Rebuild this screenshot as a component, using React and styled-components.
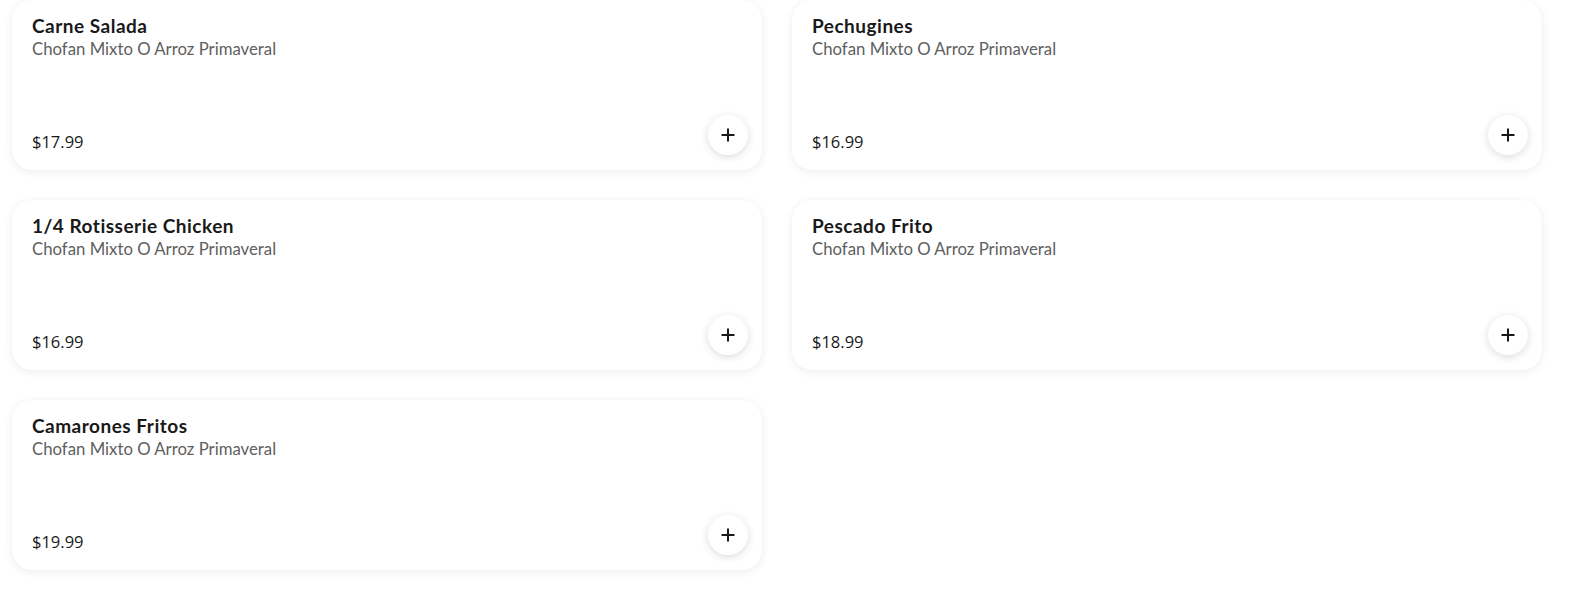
import React from "react";
import styled, { createGlobalStyle } from "styled-components";

const Global = createGlobalStyle`
  html, body { margin: 0; padding: 0; background: #ffffff; }
  body { font-family: "Lato", "Open Sans", sans-serif; color: #191919; }
  * { box-sizing: border-box; }
`;

const Grid = styled.div`
  display: grid;
  grid-template-columns: 750px 750px;
  column-gap: 30px;
  row-gap: 30px;
  padding: 0 40px 12px 12px;
`;

const Card = styled.div`
  height: 170px;
  background: #ffffff;
  border-radius: 20px;
  box-shadow: 0 2px 10px rgba(0, 0, 0, 0.07), 0 0 2px rgba(0, 0, 0, 0.03);
  display: flex;
  flex-direction: column;
  padding: 15px 14px 16px 20px;
`;

const Title = styled.div`
  font-family: "Lato", sans-serif;
  font-weight: 700;
  font-size: 19px;
  letter-spacing: 0.5px;
  line-height: 22px;
  color: #191919;
`;

const Desc = styled.div`
  font-family: "Lato", sans-serif;
  font-weight: 400;
  font-size: 16.75px;
  line-height: 21px;
  margin-top: 1px;
  color: #606060;
`;

const Bottom = styled.div`
  margin-top: auto;
  display: flex;
  justify-content: space-between;
  align-items: flex-end;
`;

const Price = styled.div`
  font-family: "Open Sans", sans-serif;
  font-size: 16.5px;
  line-height: 24px;
  color: #191919;
`;

const AddButton = styled.button`
  width: 40px;
  height: 40px;
  border-radius: 50%;
  border: none;
  background: #ffffff;
  box-shadow: 0 2px 8px rgba(0, 0, 0, 0.14);
  display: flex;
  align-items: center;
  justify-content: center;
  margin-bottom: -1px;
  padding: 0;
  cursor: pointer;
`;

const PlusIcon = () => (
  <svg width="14" height="14" viewBox="0 0 14 14" fill="none">
    <path d="M7 1.5v11M1.5 7h11" stroke="#191919" strokeWidth="2" strokeLinecap="square" />
  </svg>
);

const items = [
  { name: "Carne Salada", price: "$17.99" },
  { name: "Pechugines", price: "$16.99" },
  { name: "1/4 Rotisserie Chicken", price: "$16.99" },
  { name: "Pescado Frito", price: "$18.99" },
  { name: "Camarones Fritos", price: "$19.99" },
];

export default function App() {
  return (
    <>
      <Global />
      <Grid>
        {items.map((it) => (
          <Card key={it.name}>
            <Title>{it.name}</Title>
            <Desc>Chofan Mixto O Arroz Primaveral</Desc>
            <Bottom>
              <Price>{it.price}</Price>
              <AddButton aria-label="Add">
                <PlusIcon />
              </AddButton>
            </Bottom>
          </Card>
        ))}
      </Grid>
    </>
  );
}
